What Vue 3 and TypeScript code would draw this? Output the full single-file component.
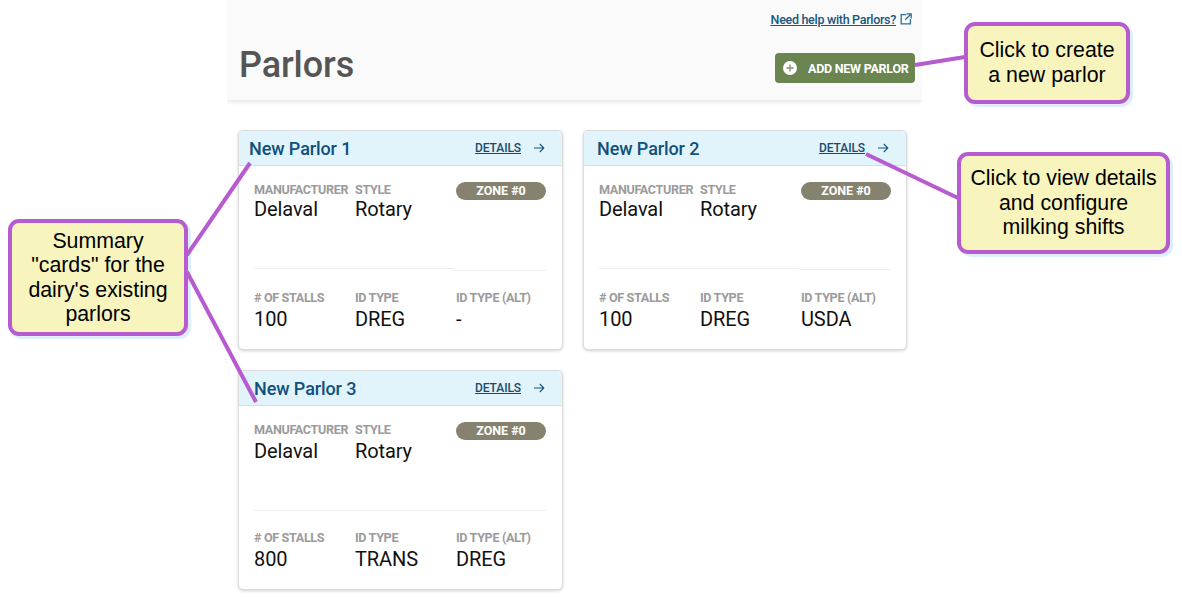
<script setup lang="ts">
interface Parlor {
  name: string
  variant: string
  stalls: string
  idType: string
  idAlt: string
}

const parlors: Parlor[] = [
  { name: 'New Parlor 1', variant: 'first', stalls: '100', idType: 'DREG', idAlt: '-' },
  { name: 'New Parlor 2', variant: 'second', stalls: '100', idType: 'DREG', idAlt: 'USDA' },
  { name: 'New Parlor 3', variant: 'third', stalls: '800', idType: 'TRANS', idAlt: 'DREG' }
]
</script>

<template>
  <div class="canvas">
    <main class="page">
      <header class="page-header">
        <a class="help" href="#">
          <span class="help-text">Need help with Parlors?</span>
          <svg width="12" height="12" viewBox="0 0 12 12" fill="none" stroke="#2a6f97" stroke-width="1.3">
            <path d="M6 1.6H1.2v9.2h9.2V6" />
            <path d="M6.5 0.8h4.7v4.7M11 1 5.2 6.8" />
          </svg>
        </a>
        <div class="title-row">
          <h1>Parlors</h1>
          <button class="add-btn" type="button">
            <svg width="14" height="14" viewBox="0 0 14 14">
              <circle cx="7" cy="7" r="7" fill="#fff" />
              <path d="M7 3.5v7M3.5 7h7" stroke="#9aa98a" stroke-width="1.8" />
            </svg>
            <span>ADD NEW PARLOR</span>
          </button>
        </div>
      </header>

      <section class="cards">
        <article v-for="p in parlors" :key="p.name" class="card" :class="p.variant">
          <div class="card-head">
            <h2>{{ p.name }}</h2>
            <a class="details" href="#">
              <span>DETAILS</span>
              <svg width="12" height="10" viewBox="0 0 12 10" fill="none" stroke="#17577f" stroke-width="1.1">
                <path d="M1 5h9.5M6.8 1l4 4-4 4" />
              </svg>
            </a>
          </div>
          <div class="card-body">
            <div class="row top">
              <div class="field">
                <div class="label">MANUFACTURER</div>
                <div class="value">Delaval</div>
              </div>
              <div class="field">
                <div class="label">STYLE</div>
                <div class="value">Rotary</div>
              </div>
              <div class="zone">ZONE #0</div>
            </div>
            <div class="divider">
              <span class="rule-left"></span>
              <span class="rule-right"></span>
            </div>
            <div class="row bottom">
              <div class="field">
                <div class="label">#&nbsp;OF STALLS</div>
                <div class="value">{{ p.stalls }}</div>
              </div>
              <div class="field">
                <div class="label">ID TYPE</div>
                <div class="value">{{ p.idType }}</div>
              </div>
              <div class="field">
                <div class="label">ID TYPE (ALT)</div>
                <div class="value">{{ p.idAlt }}</div>
              </div>
            </div>
          </div>
        </article>
      </section>
    </main>

    <div class="callout c-create">Click to create<br />a new parlor</div>
    <div class="callout c-details">Click to view details<br />and configure<br />milking shifts</div>
    <div class="callout c-cards">Summary<br />"cards" for the<br />dairy's existing<br />parlors</div>

    <svg class="leaders" width="1182" height="598" viewBox="0 0 1182 598">
      <g stroke="#b75bd1" stroke-width="4" fill="none">
        <path d="M915 65 965 57" />
        <path d="M866 154 958 198" />
        <path d="M250 163 187 255" />
        <path d="M187 272 256 402" />
      </g>
    </svg>
  </div>
</template>

<style>
html,
body {
  margin: 0;
  background: #fff;
}
</style>

<style scoped>
.canvas {
  position: relative;
  width: 1182px;
  height: 598px;
  overflow: hidden;
  background: #fff;
  font-family: Roboto, "Liberation Sans", sans-serif;
}

.page {
  width: 695px;
  margin-left: 227px;
}

.page-header {
  height: 100px;
  box-sizing: border-box;
  padding: 12px 10px 0 12px;
  background: #fafafa;
  box-shadow: 0 2px 4px rgba(0, 0, 0, 0.1);
  clip-path: inset(0 0 -10px 0);
}

.help {
  display: flex;
  justify-content: flex-end;
  align-items: center;
  gap: 4px;
  height: 14px;
  color: #17577f;
  font-size: 12.5px;
  font-weight: 500;
  letter-spacing: -0.3px;
}

.help-text {
  text-decoration: underline;
}

.title-row {
  display: flex;
  justify-content: space-between;
  align-items: flex-start;
  margin-top: 21px;
}

h1 {
  margin: 0;
  color: #555;
  font-size: 36px;
  font-weight: 500;
  line-height: 36px;
  letter-spacing: -0.1px;
}

.add-btn {
  display: flex;
  align-items: center;
  gap: 11px;
  width: 140px;
  height: 30px;
  margin: 6px -3px 0 0;
  padding: 0 0 0 8px;
  border: 0;
  border-radius: 4px;
  background: #6b8550;
  color: #fff;
  font-family: inherit;
  font-size: 12.5px;
  font-weight: 700;
  letter-spacing: -0.25px;
  white-space: nowrap;
}

.cards {
  display: grid;
  grid-template-columns: 325px 324px;
  column-gap: 20px;
  row-gap: 20px;
  padding: 30px 0 0 11px;
}

.card {
  height: 220px;
  box-sizing: border-box;
  border: 1px solid #dcdcdc;
  border-radius: 5px;
  background: #fff;
  box-shadow: 0 1px 3px rgba(0, 0, 0, 0.18);
  overflow: hidden;
}

.card-head {
  display: flex;
  justify-content: space-between;
  align-items: center;
  height: 35px;
  box-sizing: border-box;
  padding: 0 17px 0 15px;
  border-bottom: 1px solid #d5dde2;
  background: #e1f3fb;
}

.first .card-head {
  padding-left: 10px;
}

.second .card-head {
  padding-left: 13px;
}

h2 {
  margin: 0;
  color: #10507c;
  font-size: 18px;
  font-weight: 500;
  letter-spacing: -0.1px;
}

.details {
  display: flex;
  align-items: center;
  gap: 12px;
  color: #17496b;
  font-size: 12px;
  font-weight: 500;
  letter-spacing: -0.1px;
}

.card-body {
  padding: 16px 15px 0;
}

.row {
  display: grid;
  grid-template-columns: 101px 101px 90px;
}

.top {
  height: 86px;
}

.divider {
  display: flex;
  height: 3px;
}

.rule-left,
.rule-right {
  height: 1px;
  background: #eeeeee;
}

.rule-left {
  width: 200px;
}

.rule-right {
  width: 92px;
  margin-top: 2px;
}

.second .rule-right {
  margin-top: 1px;
}

.third .rule-left {
  margin-top: 2px;
}

.bottom {
  padding-top: 19px;
}

.label {
  color: #9b9b9b;
  font-size: 12.6px;
  font-weight: 700;
  line-height: 15px;
  letter-spacing: -0.35px;
  white-space: nowrap;
}

.value {
  margin-top: 2px;
  color: #111;
  font-size: 20px;
  line-height: 24px;
  letter-spacing: -0.1px;
}

.first .top .value,
.second .top .value {
  margin-top: 0;
}

.zone {
  height: 18px;
  border-radius: 9px;
  background: #85836f;
  color: #fff;
  font-size: 12.5px;
  font-weight: 700;
  line-height: 18px;
  text-align: center;
}

.leaders {
  position: absolute;
  inset: 0;
}

.callout {
  position: absolute;
  display: flex;
  align-items: center;
  justify-content: center;
  box-sizing: border-box;
  border: 4px solid #b75bd1;
  border-radius: 11px;
  background: #f7f4bd;
  box-shadow: 3px 3px 0 #deeeff;
  color: #000;
  font-family: "Liberation Sans", Arial, sans-serif;
  font-size: 21.33px;
  line-height: 25px;
  text-align: center;
}

.c-create {
  left: 964px;
  top: 22px;
  width: 166px;
  height: 82px;
}

.c-details {
  left: 957px;
  top: 152px;
  width: 213px;
  height: 102px;
  line-height: 24.5px;
}

.c-cards {
  left: 8px;
  top: 219px;
  width: 180px;
  height: 117px;
  line-height: 24.5px;
}
</style>
